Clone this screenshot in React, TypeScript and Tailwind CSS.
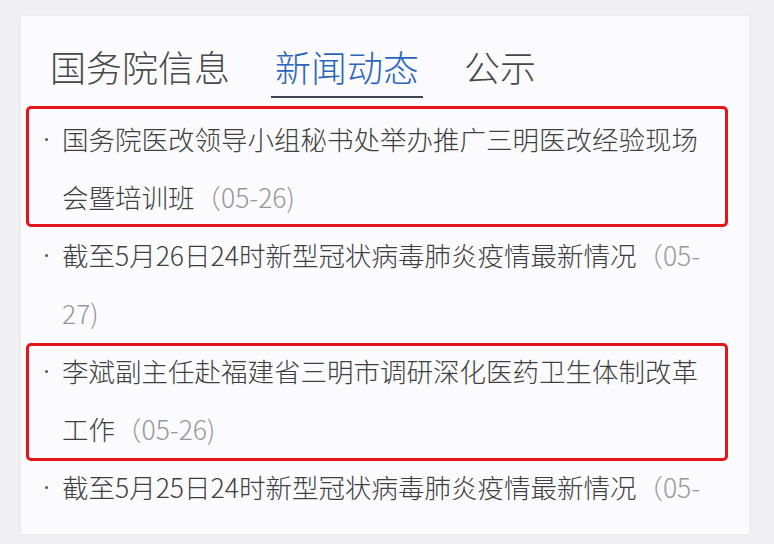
const tabs = [
  { label: "国务院信息", active: false },
  { label: "新闻动态", active: true },
  { label: "公示", active: false },
];

// each item is already split into the lines the reference wraps at
const items: { lines: string[]; date: string[] }[] = [
  { lines: ["国务院医改领导小组秘书处举办推广三明医改经验现场", "会暨培训班"], date: ["", "（05-26)"] },
  { lines: ["截至5月26日24时新型冠状病毒肺炎疫情最新情况", ""], date: ["（05-", "27)"] },
  { lines: ["李斌副主任赴福建省三明市调研深化医药卫生体制改革", "工作"], date: ["", "（05-26)"] },
  { lines: ["截至5月25日24时新型冠状病毒肺炎疫情最新情况"], date: ["（05-"] },
];

function NewsItem({ item }: { item: (typeof items)[number] }) {
  return (
    <li className="flex">
      <span className="flex h-[58px] w-[20px] shrink-0 items-center pl-[3px]">
        <span className="h-[3px] w-[3px] rounded-full bg-[#555]" />
      </span>
      <div>
        {item.lines.map((line, i) => (
          <div key={i} className="whitespace-nowrap">
            {line}
            {item.date[i] && <span className="text-[#97979c]">{item.date[i]}</span>}
          </div>
        ))}
      </div>
    </li>
  );
}

export default function App() {
  return (
    <div
      className="h-[544px] w-[774px] bg-[#f0f0f3] pt-[16px] pl-[21px]"
      style={{ fontFamily: '"Noto Sans CJK SC", "Noto Sans", sans-serif' }}
    >
      <div className="relative h-[518px] w-[728px] overflow-hidden bg-[#fbfbfd] font-light shadow-[0_0_4px_rgba(0,0,0,0.04)]">
        {/* Tabs */}
        <nav className="flex items-end gap-[45px] pl-[29px] pt-[28px] text-[36px] leading-[44px]">
          {tabs.map((t) => (
            <span
              key={t.label}
              className={
                t.active
                  ? "-mx-[4px] border-b-2 border-[#3e4651] px-[4px] pb-[8px] text-[#2a66bb]"
                  : "pb-[10px] text-[#48484b]"
              }
            >
              {t.label}
            </span>
          ))}
        </nav>

        {/* News list */}
        <ul className="mt-[12px] pl-[21px] text-[26.5px] leading-[58px] text-[#3f3f42]">
          {items.map((item, i) => (
            <NewsItem key={i} item={item} />
          ))}
        </ul>

        {/* Red annotation boxes */}
        <div className="pointer-events-none absolute left-[5px] top-[90px] h-[121px] w-[702px] rounded-[5px] border-[3px] border-[#e3141b]" />
        <div className="pointer-events-none absolute left-[5px] top-[327px] h-[118px] w-[702px] rounded-[5px] border-[3px] border-[#e3141b]" />
      </div>
    </div>
  );
}
